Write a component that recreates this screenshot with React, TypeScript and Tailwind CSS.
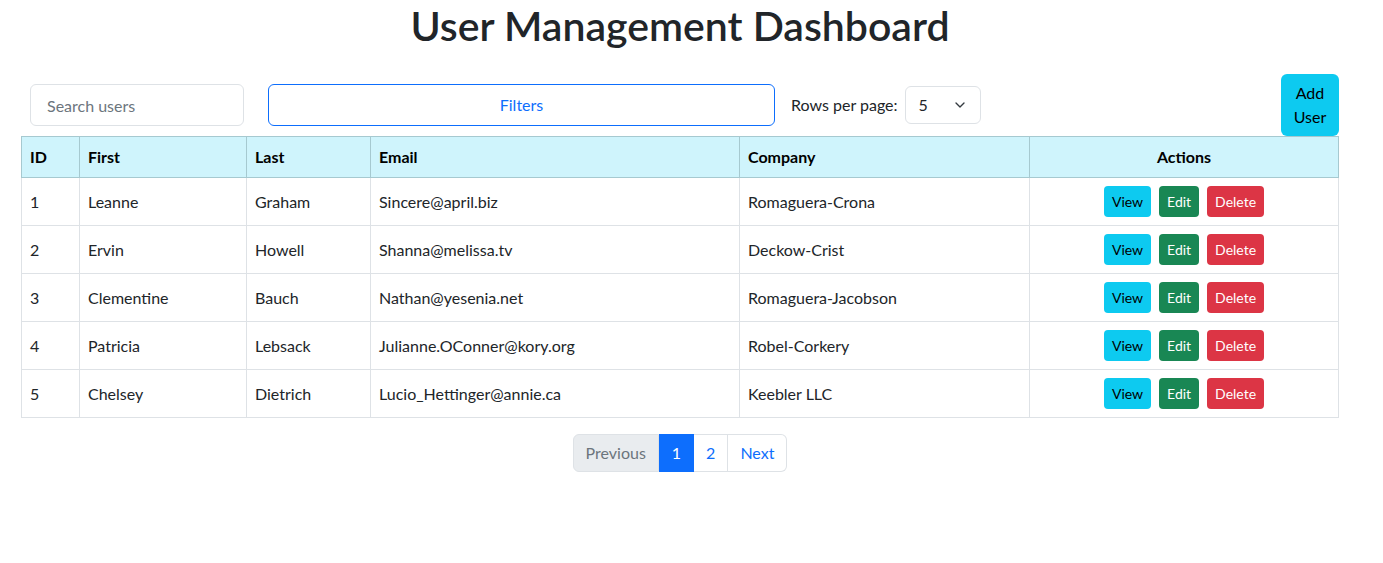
import { ChevronDown } from "lucide-react"

const users = [
    { id: 1, first: "Leanne", last: "Graham", email: "Sincere@april.biz", company: "Romaguera-Crona" },
    { id: 2, first: "Ervin", last: "Howell", email: "Shanna@melissa.tv", company: "Deckow-Crist" },
    { id: 3, first: "Clementine", last: "Bauch", email: "Nathan@yesenia.net", company: "Romaguera-Jacobson" },
    { id: 4, first: "Patricia", last: "Lebsack", email: "Julianne.OConner@kory.org", company: "Robel-Corkery" },
    { id: 5, first: "Chelsey", last: "Dietrich", email: "Lucio_Hettinger@annie.ca", company: "Keebler LLC" },
]

export default function App() {
    return (
        <div className="min-h-screen bg-white text-[#212529] font-['Lato','Noto_Sans',sans-serif]">
            <div className="ml-[21px] w-[1318px]">
                <h1 className="pt-[2px] text-center text-[41px] font-semibold leading-[48px]">
                    User Management Dashboard
                </h1>

                {/* Controls */}
                <div className="mt-[24px] flex items-center">
                    <input
                        type="text"
                        placeholder="Search users"
                        className="ml-[9px] h-[42px] w-[214px] rounded-md border border-[#dee2e6] px-4 text-base placeholder:text-[#6c757d] outline-none"
                    />
                    <button className="ml-[24px] h-[42px] w-[507px] rounded-md border border-[#0d6efd] text-base text-[#0d6efd]">
                        Filters
                    </button>
                    <span className="ml-[16px] text-base">Rows per page:</span>
                    <div className="ml-[7px] flex h-[38px] w-[76px] items-center justify-between rounded-md border border-[#dee2e6] pl-[13px] pr-[12px]">
                        <span className="text-base">5</span>
                        <ChevronDown className="h-4 w-4 text-[#343a40]" strokeWidth={2} />
                    </div>
                    <button className="ml-auto h-[62px] w-[58px] rounded-md bg-[#0dcaf0] px-3 text-base leading-6 text-black">
                        Add User
                    </button>
                </div>

                {/* Table */}
                <table className="w-[1318px] border-collapse text-base">
                    <thead>
                        <tr className="bg-[#cff4fc] text-black">
                            <th className="w-[58px] border border-[#a6c9d0] px-2 py-2 text-left font-bold leading-6">ID</th>
                            <th className="w-[167px] border border-[#a6c9d0] px-2 py-2 text-left font-bold leading-6">First</th>
                            <th className="w-[124px] border border-[#a6c9d0] px-2 py-2 text-left font-bold leading-6">Last</th>
                            <th className="w-[369px] border border-[#a6c9d0] px-2 py-2 text-left font-bold leading-6">Email</th>
                            <th className="w-[290px] border border-[#a6c9d0] px-2 py-2 text-left font-bold leading-6">Company</th>
                            <th className="border border-[#a6c9d0] px-2 py-2 text-center font-bold leading-6">Actions</th>
                        </tr>
                    </thead>
                    <tbody>
                        {users.map((u) => (
                            <tr key={u.id}>
                                <td className="border border-[#dee2e6] px-2 py-2 leading-6">{u.id}</td>
                                <td className="border border-[#dee2e6] px-2 py-2 leading-6">{u.first}</td>
                                <td className="border border-[#dee2e6] px-2 py-2 leading-6">{u.last}</td>
                                <td className="border border-[#dee2e6] px-2 py-2 leading-6">{u.email}</td>
                                <td className="border border-[#dee2e6] px-2 py-2 leading-6">{u.company}</td>
                                <td className="border border-[#dee2e6] px-2 py-2">
                                    <div className="flex justify-center gap-2">
                                        <button className="h-[31px] rounded bg-[#0dcaf0] px-2 text-sm text-black">View</button>
                                        <button className="h-[31px] rounded bg-[#198754] px-2 text-sm text-white">Edit</button>
                                        <button className="h-[31px] rounded bg-[#dc3545] px-2 text-sm text-white">Delete</button>
                                    </div>
                                </td>
                            </tr>
                        ))}
                    </tbody>
                </table>

                {/* Pagination */}
                <div className="mt-[16px] flex justify-center">
                    <div className="flex h-[38px] text-base">
                        <span className="flex items-center rounded-l-md border border-[#dee2e6] bg-[#e9ecef] px-3 text-[#6c757d]">Previous</span>
                        <span className="flex items-center border border-[#0d6efd] bg-[#0d6efd] px-3 text-white">1</span>
                        <span className="flex items-center border border-l-0 border-[#dee2e6] px-3 text-[#0d6efd]">2</span>
                        <span className="flex items-center rounded-r-md border border-l-0 border-[#dee2e6] px-3 text-[#0d6efd]">Next</span>
                    </div>
                </div>
            </div>
        </div>
    )
}
